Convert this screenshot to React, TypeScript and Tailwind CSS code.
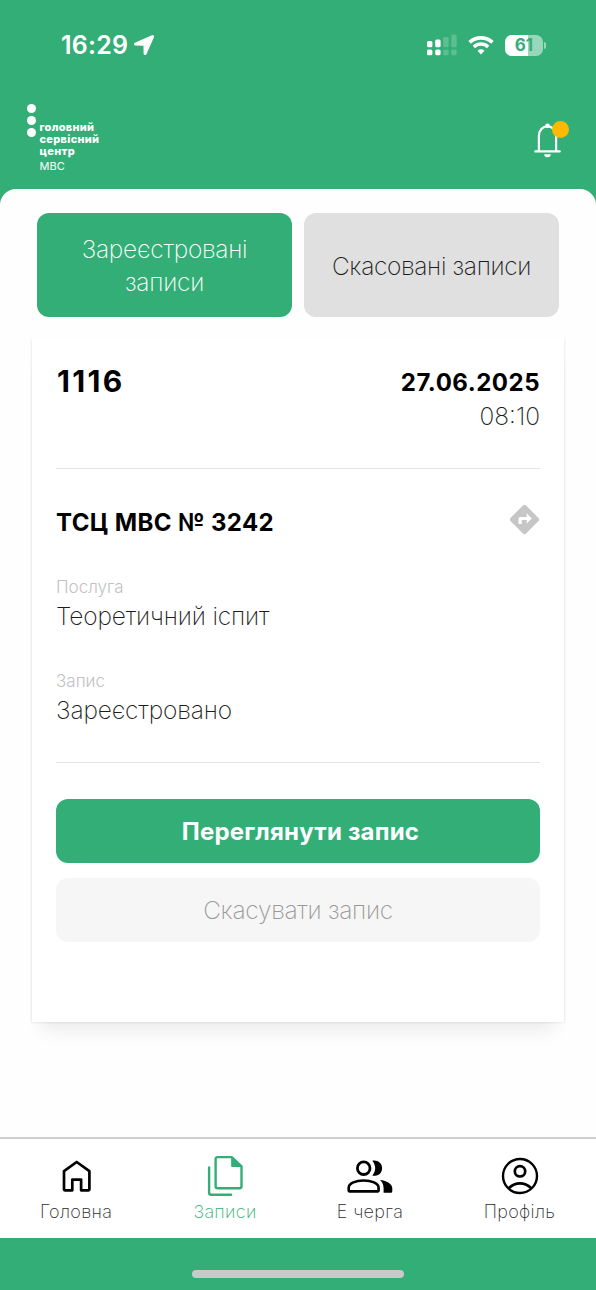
import type { ReactNode } from "react";
import clsx from "clsx";

function StatusBar() {
  return (
    <div className="flex h-[90px] items-center justify-between pl-[61px] pr-[50px] text-white">
      <div className="flex items-center gap-[6px]">
        <span className="text-[25px] leading-[30px] font-semibold tracking-[0.2px]">16:29</span>
        <svg className="size-[20px]" viewBox="0 0 20 20" fill="currentColor" stroke="currentColor" strokeWidth="1.6" strokeLinejoin="round">
          <path d="M18.2 1 1.2 8.6C.4 9 .6 9.8 1.4 9.8l8.2.1c.5 0 .7.3.7.7l.1 7.9c0 1 1 1.2 1.4.3L19.2 1.9c.3-.7-.3-1.2-1-.9z" />
        </svg>
      </div>
      <div className="flex items-center">
        <svg className="h-[22px] w-[30px]" viewBox="0 0 30 22" fill="currentColor">
          <rect x="0" y="7" width="5.4" height="6.2" rx="1.5" />
          <rect x="8.2" y="5.5" width="5.4" height="7.7" rx="1.5" />
          <rect x="0" y="15.5" width="5.4" height="5.8" rx="1.5" />
          <rect x="8.2" y="15.5" width="5.4" height="5.8" rx="1.5" />
          <g opacity="0.2">
            <rect x="16.2" y="3" width="5.4" height="10.2" rx="1.5" />
            <rect x="24.3" y="0.5" width="5.4" height="12.7" rx="1.5" />
            <rect x="16.2" y="15.5" width="5.4" height="5.8" rx="1.5" />
            <rect x="24.3" y="15.5" width="5.4" height="5.8" rx="1.5" />
          </g>
        </svg>
        <svg className="ml-[11px] h-[19px] w-[26px]" viewBox="0 0 26 19" fill="none" stroke="currentColor">
          <path d="M1.6 6.4a16.5 16.5 0 0 1 22.8 0" strokeWidth="3.6" />
          <path d="M5.9 10.9a10.3 10.3 0 0 1 14.2 0" strokeWidth="3.4" />
          <path d="M13 18.4l-3.5-3.6a5 5 0 0 1 7 0z" fill="currentColor" stroke="none" />
        </svg>
        <div className="relative ml-[11px] flex h-[21px] w-[38px] items-center justify-center overflow-hidden rounded-[7px] bg-white/50">
          <div className="absolute inset-y-0 left-0 w-[23px] bg-white" />
          <span className="relative text-[17px] leading-[21px] font-bold text-[#33ae77]">61</span>
        </div>
        <div className="ml-[1px] h-[7px] w-[2px] rounded-r-full bg-white/50" />
      </div>
    </div>
  );
}

function Header() {
  return (
    <div className="flex h-[99px] items-start justify-between pl-[27px] pr-[26px] text-white">
      <div className="flex gap-[4px] pt-[14px]">
        <div className="flex flex-col gap-[3.5px]">
          <div className="size-[8.5px] rounded-full bg-white" />
          <div className="size-[8.5px] rounded-full bg-white" />
          <div className="size-[8.5px] rounded-full bg-white" />
        </div>
        <div className="pt-[17px] text-[11px] leading-[12px] font-extrabold tracking-[0.3px]">
          <p>головний</p>
          <p>сервісний</p>
          <p>центр</p>
          <p className="mt-[3px] text-[11px] leading-[12px] font-normal tracking-normal">МВС</p>
        </div>
      </div>
      <div className="relative mt-[30px] h-[40px] w-[36px]">
        <svg className="h-[40px] w-[30px]" viewBox="0 0 30 40" fill="none" stroke="currentColor" strokeWidth="2.2">
          <path d="M4.9 31V16.2C4.9 10.3 8.7 6.3 13.5 6.3S22.1 10.3 22.1 16.2V31" />
          <path d="M1.3 31.4h24.4" strokeLinecap="round" />
          <circle cx="13.5" cy="5.8" r="2.3" fill="currentColor" stroke="none" />
          <path d="M10.2 34.3h6.6a3.3 3 0 0 1-6.6 0z" fill="currentColor" stroke="none" />
        </svg>
        <div className="absolute top-[1px] right-[1px] size-[17px] rounded-full bg-[#ffb900]" />
      </div>
    </div>
  );
}

function Field({ label, value }: { label: string; value: string }) {
  return (
    <div className="h-[94px]">
      <p className="text-[17px] leading-[22px] font-light text-[#c2c2c2]">{label}</p>
      <p className="mt-[1px] text-[24.5px] leading-[34px] font-extralight tracking-[-0.15px] text-[#1c1c1c]">{value}</p>
    </div>
  );
}

function RecordCard() {
  return (
    <section className="mx-[32px] mt-[22px] h-[683px] bg-white px-[24px] shadow-[0_0_3px_rgba(0,0,0,0.14),0_18px_18px_-10px_rgba(0,0,0,0.08)] [clip-path:inset(0_-2px_-40px_-2px)]">
      <div className="flex h-[130px] items-start justify-between border-b border-[#e4e4e4] pt-[22px]">
        <h2 className="pl-[1px] text-[30px] leading-[40px] font-bold tracking-[2.3px]">1116</h2>
        <div className="text-right">
          <p className="mt-[5px] text-[24px] leading-[34px] font-bold tracking-[0.5px]">27.06.2025</p>
          <p className="text-[24.5px] leading-[32px] font-extralight text-[#1c1c1c]">08:10</p>
        </div>
      </div>
      <div className="flex items-center justify-between pt-[34px]">
        <h3 className="pt-[1px] text-[24px] leading-[38px] font-bold tracking-[0.4px]">ТСЦ МВС № 3242</h3>
        <svg className="mb-[6px] size-[31px]" viewBox="0 0 31 31">
          <rect x="4.5" y="4.5" width="22" height="22" rx="2.5" fill="#c6c6c6" transform="rotate(45 15.5 15.5)" />
          <path d="M9.6 20v-5.2c0-1.1.7-1.8 1.8-1.8h6.3V9.3l5.1 5.2-5.1 5.1v-3.5h-5V20z" fill="#fff" />
        </svg>
      </div>
      <div className="mt-[34px] h-[187px] border-b border-[#e4e4e4]">
        <Field label="Послуга" value="Теоретичний іспит" />
        <Field label="Запис" value="Зареєстровано" />
      </div>
      <button className="mt-[36px] block h-[64px] w-full rounded-[12px] bg-[#33ae77] pt-[1px] pl-[5px] text-[24px] font-bold tracking-[0.2px] text-white">
        Переглянути запис
      </button>
      <button className="mt-[15px] block h-[64px] w-full rounded-[12px] bg-[#f6f6f6] pt-[1px] text-[24.5px] font-extralight tracking-[-0.3px] text-[#999]">
        Скасувати запис
      </button>
    </section>
  );
}

function NavItem({ label, active, className, children }: { label: string; active?: boolean; className?: string; children: ReactNode }) {
  return (
    <div className={clsx("flex flex-col items-center pt-[14px]", active ? "text-[#33ae77]" : "text-black", className)}>
      <svg className="h-[48px] w-[60px]" viewBox="0 0 60 48" fill="none" stroke="currentColor" strokeLinejoin="round" strokeLinecap="round">
        {children}
      </svg>
      <span className={clsx("text-[18px] leading-[22px] font-extralight tracking-[0.3px] whitespace-nowrap", !active && "text-[#2a2a2a]")}>
        {label}
      </span>
    </div>
  );
}

export default function App() {
  return (
    <main className="flex h-[1290px] w-[596px] flex-col overflow-hidden bg-[#33ae77] font-['Inter',sans-serif] text-black">
      <StatusBar />
      <Header />
      <div className="h-[948px] rounded-t-[16px] bg-[#fefefe] pt-[24px]">
        <div className="ml-[37px] flex gap-[12px]">
          <button className="h-[104px] w-[255px] rounded-[12px] bg-[#33ae77] px-[30px] pt-[2px] text-[24.5px] leading-[33px] font-extralight tracking-[-0.25px] text-white">
            Зареєстровані записи
          </button>
          <button className="h-[104px] w-[255px] rounded-[12px] bg-[#e0e0e0] pt-[2px] text-[24.5px] leading-[33px] font-extralight tracking-[-0.35px] whitespace-nowrap text-[#1c1c1c]">
            Скасовані записи
          </button>
        </div>
        <RecordCard />
      </div>
      <nav className="grid h-[101px] grid-cols-4 border-t-2 border-[#cdcdcd] bg-white">
        <NavItem label="Головна" className="pl-[3px]">
          <path d="M18 18.2 30.7 9l12.7 9.200v17.900a1.200 1.200 0 0 1-1.200 1.200h-7.100V26.600h-8.800v10.700h-7.100a1.200 1.200 0 0 1-1.200-1.200z" strokeWidth="2.7" />
        </NavItem>
        <NavItem label="Записи" active className="pl-[3px]">
          <path d="M22.600 4.100H36.700l9.800 9.200v20a2 2 0 0 1-2 2H22.600a2 2 0 0 1-2-2V6.100a2 2 0 0 1 2-2z" strokeWidth="2.400" />
          <path d="M36.700 4.100v9.400h9.800z" fill="currentColor" strokeWidth="1" />
          <path d="M14.100 14.500v25.300a2 2 0 0 0 2 2h20" strokeWidth="2.400" />
        </NavItem>
        <NavItem label="Е черга" className="pr-[5px]">
          <circle cx="23.7" cy="15.2" r="6.300" strokeWidth="2.800" />
          <path d="M8.700 37.600v-2.800c0-4.700 7.200-7.300 14.900-7.300s15 2.600 15 7.300v2.800a.8.8 0 0 1-.8.8H9.500a.8.8 0 0 1-.8-.8z" strokeWidth="2.600" />
          <path d="M32.300 7.700c5.600-.9 9.800 2.500 9.800 7.500s-4.200 8.400-9.800 7.500c3.900-5 3.900-10.100 0-15z" fill="currentColor" stroke="none" />
          <path d="M40 27c6.900.7 12.300 3.700 12.300 8.500v2.800a1.500 1.500 0 0 1-1.500 1.500h-7.200v-4.400c0-3.300-1.100-6-3.600-8.400z" fill="currentColor" stroke="none" />
        </NavItem>
        <NavItem label="Профіль" className="pr-[4px]">
          <circle cx="30" cy="23" r="17" strokeWidth="2.4" />
          <circle cx="30" cy="18.300" r="5.200" strokeWidth="2.7" />
          <path d="M19 35c6.500-6.200 15.500-6.200 22 0" strokeWidth="2.6" />
        </NavItem>
      </nav>
      <div className="flex h-[52px] justify-center pt-[32px]">
        <div className="h-[8px] w-[212px] rounded-full bg-[#c9c9c9]" />
      </div>
    </main>
  );
}
